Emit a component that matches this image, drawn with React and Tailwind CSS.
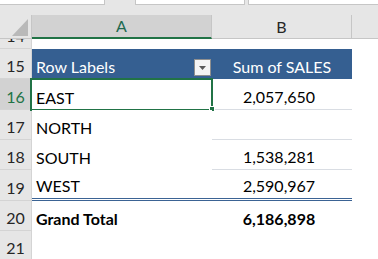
const rows = [
  { n: 15, h: 'h-[30px]', header: true },
  { n: 16, h: 'h-[31px]', a: 'EAST', b: '2,057,650', sel: true, line: true },
  { n: 17, h: 'h-[30px]', a: 'NORTH', b: '', line: true },
  { n: 18, h: 'h-[30px]', a: 'SOUTH', b: '1,538,281', line: true },
  { n: 19, h: 'h-[31px]', a: 'WEST', b: '2,590,967', dbl: true },
  { n: 20, h: 'h-[30px]', a: 'Grand Total', b: '6,186,898', bold: true },
  { n: 21, h: 'h-[30px]' },
]

const RowHead = ({ n, active }) => (
  <div
    className={`flex w-[32px] shrink-0 items-end justify-center border-r border-b border-[#d4d4d4] pb-[2px] ${
      active ? 'bg-[#d2d2d2] text-[#217346]' : 'bg-[#e6e6e6] text-[#262626]'
    }`}
  >
    {n}
  </div>
)

const Row = ({ row }) => {
  if (row.header) {
    return (
      <div className={`flex ${row.h}`}>
        <RowHead n={row.n} />
        <div className="flex w-[180px] shrink-0 items-end justify-between bg-[#355f91] pb-[2px] pl-[4px] text-white">
          <span>Row Labels</span>
          <span className="mb-[1px] mr-[1px] flex h-[17px] w-[17px] items-center justify-center border border-[#8f8f8f] bg-[#f4f4f4]">
            <svg width="7" height="4" viewBox="0 0 7 4">
              <path d="M0 0H7L3.5 4Z" fill="#595959" />
            </svg>
          </span>
        </div>
        <div className="flex w-[140px] shrink-0 items-end justify-center bg-[#355f91] pb-[2px] text-white">
          Sum of SALES
        </div>
        <div className="flex-1 bg-white" />
      </div>
    )
  }

  const bottom = row.dbl
    ? 'border-b-[3px] border-double border-[#3b6394]'
    : ''

  return (
    <div className={`flex ${row.h}`}>
      <RowHead n={row.n} active={row.sel} />
      <div
        className={`relative flex w-[180px] shrink-0 items-end bg-white pb-[2px] pl-[4px] text-black ${bottom} ${
          row.bold ? 'font-bold' : ''
        }`}
      >
        {row.a}
        {row.sel && (
          <>
            <div className="absolute left-[-2px] top-[-1px] h-[33px] w-[183px] border-2 border-[#217346]" />
            <div className="absolute left-[177px] top-[27px] h-[6px] w-[6px] border border-white bg-[#217346]" />
          </>
        )}
      </div>
      <div
        className={`flex w-[140px] shrink-0 items-end justify-center bg-white pb-[2px] pr-[6px] text-black ${
          row.line ? 'border-b border-[#d9dde3]' : bottom
        } ${row.bold ? 'font-bold' : ''}`}
      >
        {row.b}
      </div>
      <div className="flex-1 bg-white" />
    </div>
  )
}

export default function App() {
  return (
    <div
      className="h-[259px] w-[378px] overflow-hidden bg-white text-[16px] leading-[20px]"
      style={{ fontFamily: 'Lato, "Open Sans", sans-serif' }}
    >
      {/* ribbon strip with the name box and formula bar edges */}
      <div className="flex h-[15px] bg-[#e6e6e6]">
        <div className="h-[5px] w-[105px] border-r border-b border-[#c6c6c6] bg-white" />
        <div className="ml-[30px] h-[5px] w-[110px] border-x border-b border-[#c6c6c6] bg-white" />
        <div className="ml-[3px] h-[5px] flex-1 border-l border-b border-[#c6c6c6] bg-white" />
      </div>

      {/* column headers */}
      <div className="flex h-[24px]">
        <div className="relative w-[32px] shrink-0 border-r border-b border-[#c6c6c6] bg-[#e6e6e6]">
          <svg className="absolute right-[3px] bottom-[2px]" width="16" height="17" viewBox="0 0 16 17">
            <path d="M16 0V17H0Z" fill="#b9b9b9" />
          </svg>
        </div>
        <div className="flex w-[180px] shrink-0 items-center justify-center border-r border-b-2 border-r-[#c6c6c6] border-b-[#217346] bg-[#d2d2d2] text-[#1e6a50]">
          A
        </div>
        <div className="flex w-[140px] shrink-0 items-center justify-center border-r border-b border-[#c6c6c6] bg-[#e6e6e6] text-[#262626]">
          B
        </div>
        <div className="flex-1 border-b border-[#c6c6c6] bg-[#e6e6e6]" />
      </div>

      {/* row 14, cut off by the scroll position */}
      <div className="flex h-[10px] overflow-hidden">
        <div className="flex w-[32px] shrink-0 flex-col justify-end overflow-hidden border-r border-b border-[#d4d4d4] bg-[#e6e6e6] text-[#262626]">
          <div className="flex h-[30px] shrink-0 items-end justify-center pb-[2px]">14</div>
        </div>
        <div className="flex-1 bg-white" />
      </div>

      {rows.map((row) => (
        <Row key={row.n} row={row} />
      ))}
    </div>
  )
}
